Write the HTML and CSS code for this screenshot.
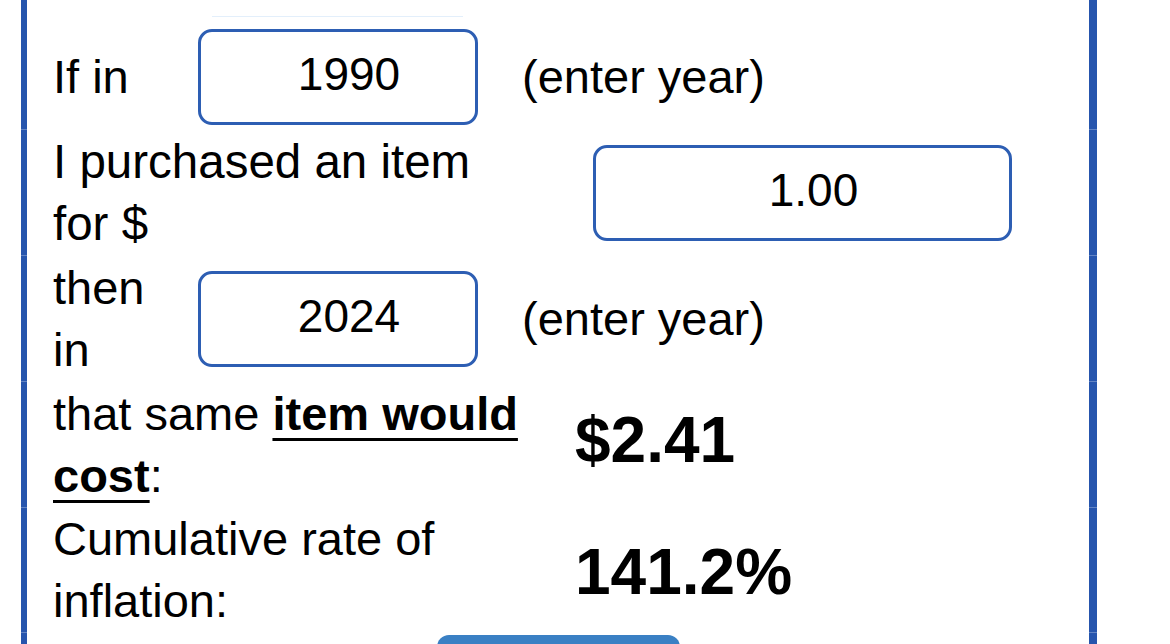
FILE: index.html
```html
<!DOCTYPE html>
<html lang="en">
<head>
    <meta charset="UTF-8">
    <meta name="viewport" content="width=device-width, initial-scale=1.0">
    <title>Inflation Calculator</title>
    <link rel="stylesheet" href="styles.css">
</head>
<body>

    <div class="calc">
        <div class="calc-top"><span class="calc-top-line"></span></div>

        <div class="row row-year row-first">
            <label class="row-label" for="fromYear">If in</label>
            <input class="field field-year" id="fromYear" type="text" value="1990">
            <span class="row-note">(enter year)</span>
        </div>

        <div class="row row-amount">
            <label class="row-label" for="amount">I purchased an item for $</label>
            <input class="field field-amount" id="amount" type="text" value="1.00">
        </div>

        <div class="row row-year">
            <label class="row-label" for="toYear">then in</label>
            <input class="field field-year" id="toYear" type="text" value="2024">
            <span class="row-note">(enter year)</span>
        </div>

        <div class="row row-result">
            <div class="row-label">that same <strong class="mark">item would</strong> <strong class="mark">cost</strong>:</div>
            <div class="row-value">$2.41</div>
        </div>

        <div class="row row-result row-last">
            <div class="row-label">Cumulative rate of inflation:</div>
            <div class="row-value">141.2%</div>
        </div>

        <div class="actions">
            <button class="calc-button" type="button" aria-label="Calculate"></button>
        </div>
    </div>

</body>
</html>
```

FILE: styles.css
```css
body {
    margin: 0;
    padding: 0;
    background-color: #fff;
    color: #000;
    font-family: "Liberation Sans", Arial, sans-serif;
    font-size: 47px;
    line-height: 62px;
}

.calc {
    margin-left: 21px;
    width: 1062px;
    border-left: 6px solid #2655ad;
    border-right: 8px solid #2655ad;
}

.calc-top {
    box-sizing: border-box;
    height: 25px;
    padding: 16px 0 0 185px;
}

.calc-top-line {
    display: block;
    width: 251px;
    height: 1px;
    background-color: #e3effb;
}

/* each row reaches over the side borders so its thin line shows there */
.row {
    display: grid;
    align-items: center;
    box-sizing: border-box;
    height: 126px;
    margin: 0 -8px 0 -6px;
    padding-left: 32px;
    border-top: 1px solid rgba(255, 255, 255, 0.28);
}

.row-first {
    height: 104px;
    border-top: none;
}

.row-year {
    grid-template-columns: 145px 280px auto;
}

.row-year .row-label {
    max-width: 110px;
}

.row-amount {
    grid-template-columns: 540px 419px;
}

.row-amount .row-label {
    max-width: 475px;
    font-size: 47.5px;
}

.row-result {
    grid-template-columns: 522px auto;
}

.row-result .row-label {
    max-width: 480px;
}

.row-last {
    border-bottom: 1px solid rgba(255, 255, 255, 0.28);
}

.row-last .row-label {
    padding-bottom: 14px;
}

.row-note {
    padding-left: 44px;
}

.field {
    box-sizing: border-box;
    height: 96px;
    padding: 0 0 6px 22px;
    border: 3px solid #2d5eb3;
    border-radius: 14px;
    background-color: #fff;
    color: #000;
    font-family: "Liberation Sans", Arial, sans-serif;
    font-size: 46px;
    text-align: center;
    outline: none;
}

.field-year {
    width: 280px;
}

.field-amount {
    width: 419px;
}

.mark {
    text-decoration: underline;
    text-decoration-thickness: 3px;
    text-underline-offset: 8px;
}

.row-value {
    padding-bottom: 10px;
    font-size: 64px;
    font-weight: bold;
}

.actions {
    padding: 2px 0 20px 410px;
}

.calc-button {
    display: block;
    width: 243px;
    height: 60px;
    border: none;
    border-radius: 12px;
    background-color: #3a80c4;
    cursor: pointer;
}
```
